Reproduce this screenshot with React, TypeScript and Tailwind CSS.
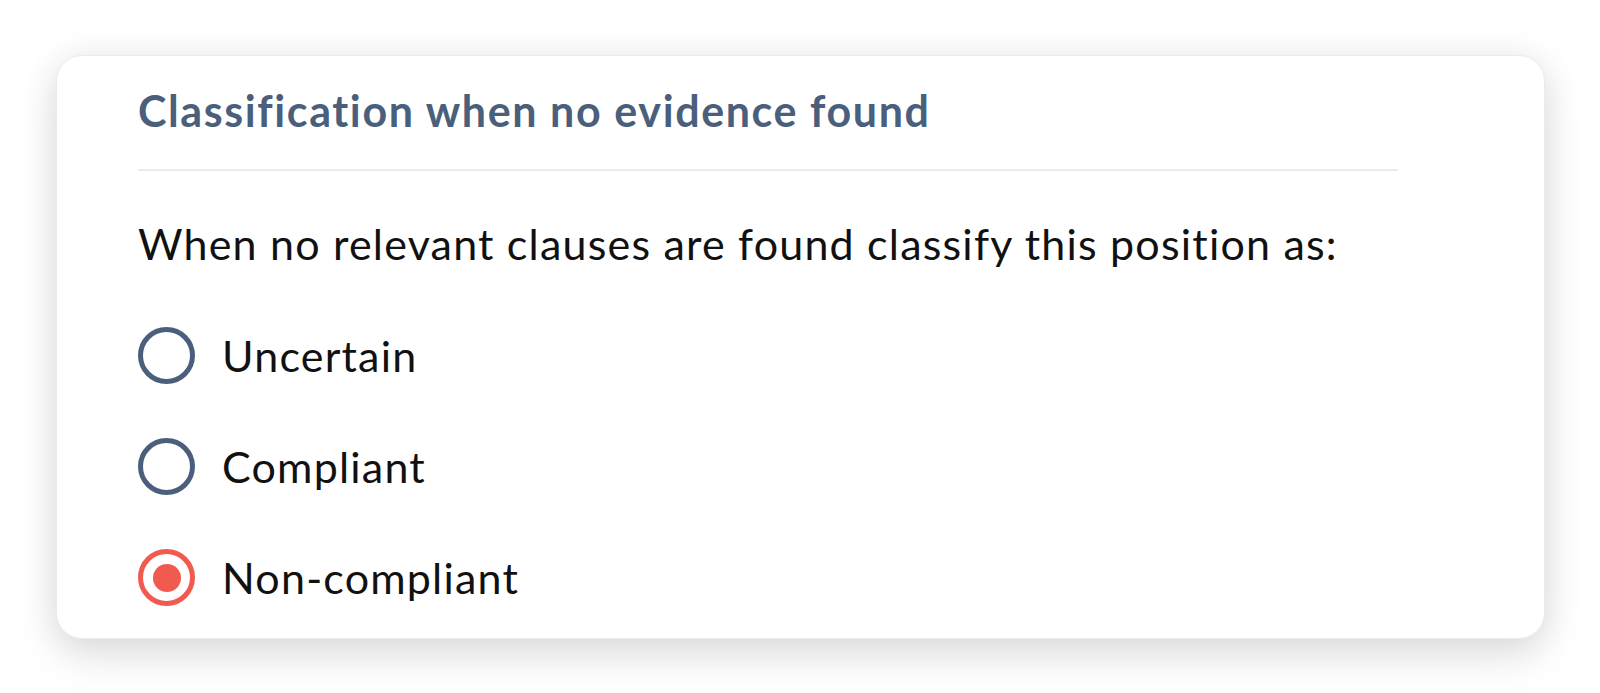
import React, { useState } from "react";

const options = ["Uncertain", "Compliant", "Non-compliant"];

function Radio({ checked }: { checked: boolean }) {
  if (checked) {
    return (
      <span className="flex h-[57px] w-[57px] shrink-0 items-center justify-center rounded-full border-[5px] border-[#f15a4f]">
        <span className="h-[28px] w-[28px] rounded-full bg-[#f15a4f]" />
      </span>
    );
  }
  return <span className="h-[57px] w-[57px] shrink-0 rounded-full border-[5px] border-[#4b5f7d]" />;
}

export default function App() {
  const [value, setValue] = useState("Non-compliant");

  return (
    <div className="min-h-screen bg-white pt-[55px] pl-[56px] pr-[55px] font-['Lato',sans-serif]">
      <div className="h-[584px] rounded-[26px] border border-[#ebebeb] bg-white pl-[81px] pr-[146px] shadow-[0_0_36px_rgba(0,0,0,0.07),0_18px_40px_rgba(0,0,0,0.11)]">
        <h2 className="pt-[30px] text-[43px] leading-[50px] font-bold tracking-[1.6px] text-[#4a5f7c]">
          Classification when no evidence found
        </h2>
        <div className="mt-[33px] h-[2px] bg-[#ebebeb]" />
        <p className="mt-[47px] text-[43px] leading-[52px] tracking-[1.2px] text-[#111]">
          When no relevant clauses are found classify this position as:
        </p>
        <div className="mt-[57px] flex flex-col gap-[54px]">
          {options.map((opt) => (
            <label key={opt} className="flex cursor-pointer items-center gap-[27px]" onClick={() => setValue(opt)}>
              <Radio checked={value === opt} />
              <span className="text-[43px] leading-[50px] tracking-[1.2px] text-[#111]">{opt}</span>
            </label>
          ))}
        </div>
      </div>
    </div>
  );
}
